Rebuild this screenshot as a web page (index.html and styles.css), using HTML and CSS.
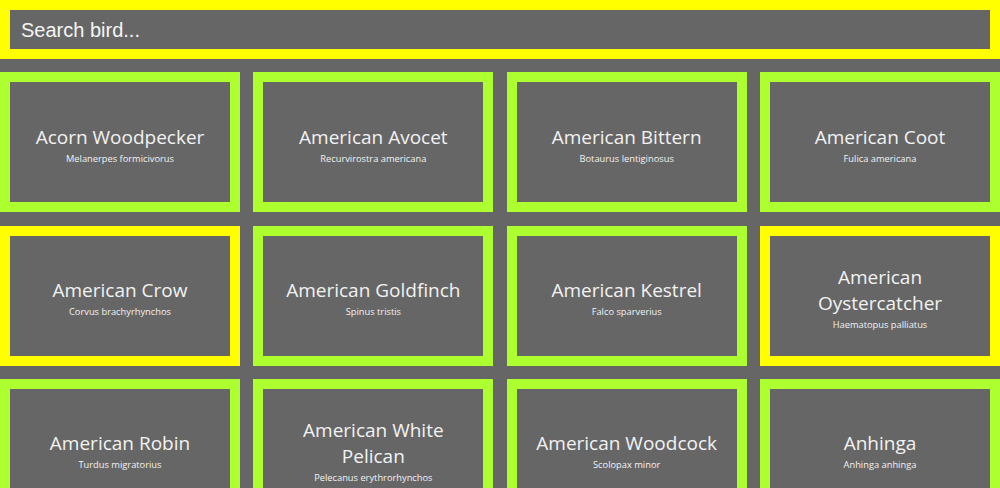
FILE: index.html
```html
<!DOCTYPE html>
<html lang="en">
<head>
<meta charset="utf-8">
<title>Birds</title>
<link rel="stylesheet" href="styles.css">
</head>
<body>
<input class="search" type="text" placeholder="Search bird...">
<div class="grid">
  <div class="card"><div class="name">Acorn Woodpecker</div><div class="sci">Melanerpes formicivorus</div></div>
  <div class="card"><div class="name">American Avocet</div><div class="sci">Recurvirostra americana</div></div>
  <div class="card"><div class="name">American Bittern</div><div class="sci">Botaurus lentiginosus</div></div>
  <div class="card"><div class="name">American Coot</div><div class="sci">Fulica americana</div></div>
  <div class="card card-hl"><div class="name">American Crow</div><div class="sci">Corvus brachyrhynchos</div></div>
  <div class="card"><div class="name">American Goldfinch</div><div class="sci">Spinus tristis</div></div>
  <div class="card"><div class="name">American Kestrel</div><div class="sci">Falco sparverius</div></div>
  <div class="card card-hl"><div class="name">American Oystercatcher</div><div class="sci">Haematopus palliatus</div></div>
  <div class="card"><div class="name">American Robin</div><div class="sci">Turdus migratorius</div></div>
  <div class="card"><div class="name">American White Pelican</div><div class="sci">Pelecanus erythrorhynchos</div></div>
  <div class="card"><div class="name">American Woodcock</div><div class="sci">Scolopax minor</div></div>
  <div class="card"><div class="name">Anhinga</div><div class="sci">Anhinga anhinga</div></div>
</div>
</body>
</html>
```
FILE: styles.css
```css
html, body {
  margin: 0;
  padding: 0;
  background: #666666;
}
body {
  font-family: "Open Sans", "Noto Sans", sans-serif;
  color: #f2f2f2;
}
.search {
  display: block;
  box-sizing: border-box;
  width: 100%;
  height: 59px;
  margin: 0 0 13.333px 0;
  padding: 1px 11px 0;
  border: 10px solid #ffff00;
  background: #666666;
  color: #f5f5f5;
  font-family: "Liberation Sans", Arial, sans-serif;
  font-size: 20px;
  outline: none;
}
.search::placeholder {
  color: #f5f5f5;
  opacity: 1;
}
.grid {
  display: grid;
  grid-template-columns: repeat(4, 240px);
  justify-content: space-between;
  row-gap: 13.333px;
}
.card {
  box-sizing: border-box;
  height: 140px;
  border: 10px solid #adff2f;
  padding: 5px 10px 0;
  display: flex;
  flex-direction: column;
  justify-content: center;
  align-items: center;
  text-align: center;
}
.card-hl {
  border-color: #ffff00;
}
.name {
  font-size: 19px;
  line-height: 26px;
}
.sci {
  margin-top: 1px;
  font-size: 9.3px;
  line-height: 15px;
}
```
